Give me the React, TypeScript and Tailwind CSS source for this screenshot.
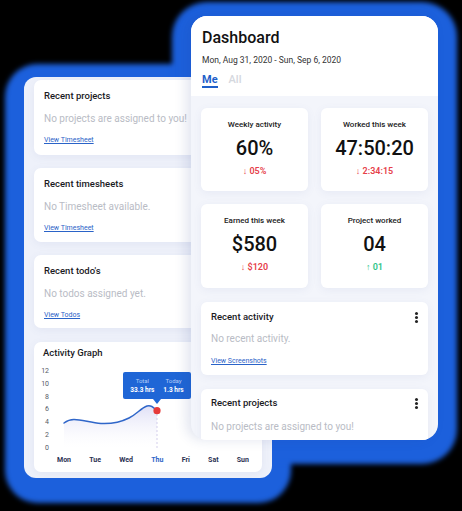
import React from "react";

function SmallCard({ title, sub, link, h }: { title: string; sub: string; link: string; h: string }) {
  return (
    <div className={`${h} shrink-0 bg-white rounded-[7px] shadow-[0_2px_8px_rgba(90,100,170,0.08)] px-[10px] pt-[10px]`}>
      <div className="text-[9.5px] leading-[12px] font-medium text-[#1b1b1f]">{title}</div>
      <div className="mt-[10px] text-[10px] leading-[14px] text-[#b9bcc5]">{sub}</div>
      <div className="mt-[9px] text-[7px] leading-[10px] text-[#2a63c8] underline">{link}</div>
    </div>
  );
}

function Kebab() {
  return (
    <div className="flex flex-col gap-[1.6px] pt-[1px]">
      <span className="block w-[2.6px] h-[2.6px] rounded-full bg-[#222]" />
      <span className="block w-[2.6px] h-[2.6px] rounded-full bg-[#222]" />
      <span className="block w-[2.6px] h-[2.6px] rounded-full bg-[#222]" />
    </div>
  );
}

function Stat({ title, value, change, up }: { title: string; value: string; change: string; up?: boolean }) {
  return (
    <div className="bg-white rounded-[6px] shadow-[0_2px_8px_rgba(90,100,170,0.08)] flex flex-col items-center pt-[12px]">
      <div className="text-[8px] leading-[10px] font-medium text-[#222]">{title}</div>
      <div className="mt-[6px] text-[20px] leading-[24px] font-medium text-[#111]">{value}</div>
      <div className={`mt-[5px] text-[9px] leading-[12px] font-semibold ${up ? "text-[#2fc488]" : "text-[#e6404a]"}`}>
        {up ? "↑" : "↓"} {change}
      </div>
    </div>
  );
}

export default function App() {
  const days = ["Mon", "Tue", "Wed", "Thu", "Fri", "Sat", "Sun"];
  const curve =
    "M15,56 C19,53 22,52.5 25,52.5 C33,52.5 42,56 52,56.5 C62,57 72,55 80,51 C88,47 92,41 98,39 C102,38 104,40 108,43.7";
  return (
    <div className="relative w-[462px] h-[511px] overflow-hidden bg-black font-[family-name:Roboto,sans-serif]">
      {/* blue halos */}
      <div className="absolute left-[24px] top-[77px] w-[248px] h-[401px] rounded-[14px] bg-[#1c60dc] shadow-[0_6px_5px_19px_#1c60dc]" />
      <div className="absolute left-[191px] top-[16px] w-[247px] h-[424px] rounded-[16px] bg-[#1c60dc] shadow-[0_5px_5px_19px_#1c60dc]" />

      {/* left panel */}
      <div className="absolute left-[24px] top-[77px] w-[248px] h-[401px] rounded-[12px] bg-[#eef1fa] overflow-hidden flex flex-col px-[10px] pt-[3px]">
        <SmallCard h="h-[75px]" title="Recent projects" sub="No projects are assigned to you!" link="View Timesheet" />
        <div className="h-[13px] shrink-0" />
        <SmallCard h="h-[74px]" title="Recent timesheets" sub="No Timesheet available." link="View Timesheet" />
        <div className="h-[13px] shrink-0" />
        <SmallCard h="h-[73px]" title="Recent todo's" sub="No todos assigned yet." link="View Todos" />
        <div className="h-[14px] shrink-0" />
        <div className="h-[130px] shrink-0 bg-white rounded-[7px] shadow-[0_2px_8px_rgba(90,100,170,0.08)] pt-[5px]">
          <div className="px-[9px] text-[9.5px] leading-[12px] font-medium text-[#1b1b1f]">Activity Graph</div>
          <div className="h-[112px] flex flex-col pt-[8px]">
            <div className="flex h-[85px]">
              <div className="w-[15px] h-[85px] flex flex-col justify-between items-end text-[7px] leading-[8px] text-[#555a66]">
                {["12", "10", "8", "6", "4", "2", "0"].map((l) => (
                  <span key={l}>{l}</span>
                ))}
              </div>
              <div className="relative w-[213px] h-[85px]">
                <svg width="213" height="85" viewBox="0 0 213 85">
                  <defs>
                    <linearGradient id="ag" x1="0" y1="0" x2="0" y2="1">
                      <stop offset="0" stopColor="#dcdcf5" stopOpacity="0.9" />
                      <stop offset="1" stopColor="#ffffff" stopOpacity="0.2" />
                    </linearGradient>
                  </defs>
                  <path d={`${curve} L108,81 L15,81 Z`} fill="url(#ag)" />
                  <line x1="108" y1="47" x2="108" y2="81" stroke="#c9c3e6" strokeWidth="0.8" strokeDasharray="2 2" />
                  <path d={curve} fill="none" stroke="#2f66c9" strokeWidth="1.5" strokeLinecap="round" />
                  <circle cx="108" cy="43.7" r="3.6" fill="#e63a3a" />
                </svg>
                <div className="absolute left-[74px] top-[5px] w-[68px] h-[27px] rounded-[2px] bg-[#1f66d6] flex justify-center gap-[9px] pt-[4px]">
                  <div className="flex flex-col items-center">
                    <span className="text-[6px] leading-[10px] text-[#b3cdf6]">Total</span>
                    <span className="text-[6.5px] leading-[9px] font-bold text-white">33.3 hrs</span>
                  </div>
                  <div className="flex flex-col items-center">
                    <span className="text-[6px] leading-[10px] text-[#b3cdf6]">Today</span>
                    <span className="text-[6.5px] leading-[9px] font-bold text-white">1.3 hrs</span>
                  </div>
                  <div className="absolute left-[29.5px] top-[27px] w-0 h-0 border-l-[4px] border-r-[4px] border-t-[5px] border-l-transparent border-r-transparent border-t-[#1f66d6]" />
                </div>
              </div>
            </div>
            <div className="ml-[23px] w-[192px] h-[16px] flex justify-between text-[7px] leading-[16px] font-bold text-[#2b3152]">
              {days.map((d) => (
                <span key={d} className={d === "Thu" ? "text-[#2f66c9]" : ""}>
                  {d}
                </span>
              ))}
            </div>
          </div>
        </div>
      </div>

      {/* right panel */}
      <div className="absolute left-[191px] top-[16px] w-[247px] h-[424px] rounded-[16px] overflow-hidden bg-[#f3f5fb] shadow-[-5px_0_12px_rgba(40,60,140,0.13)] flex flex-col">
        <div className="h-[80px] shrink-0 bg-white px-[11px] pt-[12px]">
          <div className="text-[16px] leading-[20px] font-medium text-[#111]">Dashboard</div>
          <div className="mt-[6px] text-[8.5px] leading-[12px] text-[#333]">Mon, Aug 31, 2020 - Sun, Sep 6, 2020</div>
          <div className="mt-[8px] flex gap-[11px] text-[11px] leading-[12px] font-bold">
            <span className="text-[#1f5fc9] border-b-2 border-[#1f5fc9]">Me</span>
            <span className="text-[#d5d8de] font-medium">All</span>
          </div>
        </div>
        <div className="px-[10px] pt-[12px] flex flex-col">
          <div className="grid grid-cols-2 gap-x-[13px] gap-y-[13px]">
            <div className="h-[83px] grid">
              <Stat title="Weekly activity" value="60%" change="05%" />
            </div>
            <div className="h-[83px] grid">
              <Stat title="Worked this week" value="47:50:20" change="2:34:15" />
            </div>
            <div className="h-[84px] grid">
              <Stat title="Earned this week" value="$580" change="$120" />
            </div>
            <div className="h-[84px] grid">
              <Stat title="Project worked" value="04" change="01" up />
            </div>
          </div>
          <div className="mt-[14px] h-[73px] bg-white rounded-[6px] shadow-[0_2px_8px_rgba(90,100,170,0.08)] px-[10px] pt-[9px]">
            <div className="flex justify-between items-center">
              <span className="text-[9.5px] leading-[12px] font-medium text-[#1b1b1f]">Recent activity</span>
              <Kebab />
            </div>
            <div className="mt-[9px] text-[10px] leading-[14px] text-[#b9bcc5]">No recent activity.</div>
            <div className="mt-[10px] text-[7px] leading-[10px] text-[#2a63c8] underline">View Screenshots</div>
          </div>
          <div className="mt-[14px] h-[70px] bg-white rounded-[6px] shadow-[0_2px_8px_rgba(90,100,170,0.08)] px-[10px] pt-[8px]">
            <div className="flex justify-between items-center">
              <span className="text-[9.5px] leading-[12px] font-medium text-[#1b1b1f]">Recent projects</span>
              <Kebab />
            </div>
            <div className="mt-[11px] text-[10px] leading-[14px] text-[#b9bcc5]">No projects are assigned to you!</div>
          </div>
        </div>
      </div>
    </div>
  );
}
